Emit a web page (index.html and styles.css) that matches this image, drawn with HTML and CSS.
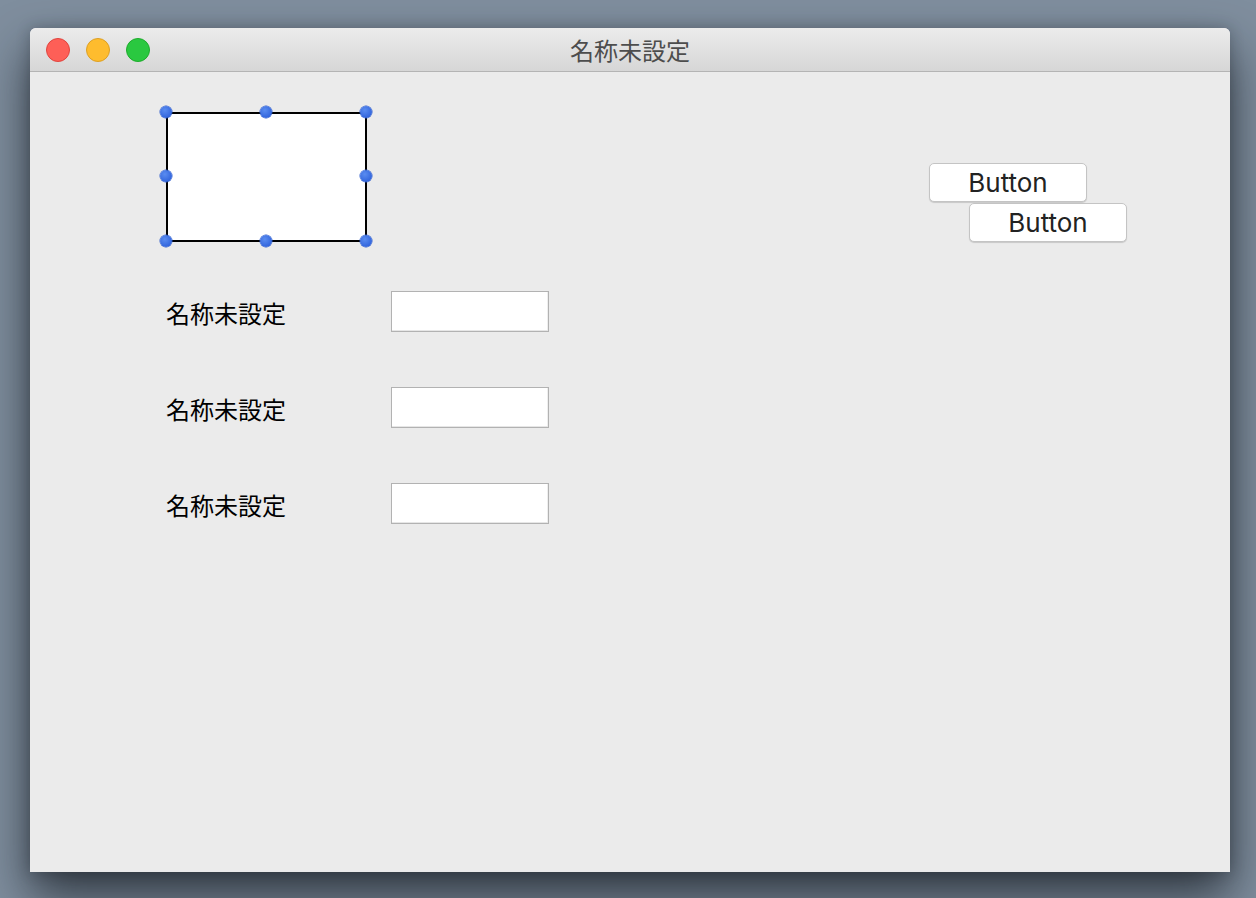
FILE: index.html
```html
<!DOCTYPE html>
<html lang="ja">
<head>
<meta charset="utf-8">
<title>名称未設定</title>
<link rel="stylesheet" href="styles.css">
</head>
<body>
<div class="window">
  <div class="titlebar">
    <div class="lights">
      <span class="light red"></span>
      <span class="light yellow"></span>
      <span class="light green"></span>
    </div>
    <div class="title">名称未設定</div>
  </div>
  <div class="content">
    <div class="top-row">
      <div class="selbox">
        <span class="h h-tl"></span><span class="h h-tm"></span><span class="h h-tr"></span>
        <span class="h h-ml"></span><span class="h h-mr"></span>
        <span class="h h-bl"></span><span class="h h-bm"></span><span class="h h-br"></span>
      </div>
      <div class="buttons">
        <button class="btn btn-a">Button</button>
        <button class="btn btn-b">Button</button>
      </div>
    </div>
    <div class="form">
      <label class="lbl">名称未設定</label><div class="field"></div>
      <label class="lbl">名称未設定</label><div class="field"></div>
      <label class="lbl">名称未設定</label><div class="field"></div>
    </div>
  </div>
</div>
</body>
</html>
```
FILE: styles.css
```css
html, body {
  margin: 0;
  padding: 0;
}
body {
  width: 1256px;
  height: 898px;
  overflow: hidden;
  background: #7f8e9e;
  font-family: "Noto Sans CJK JP", "Noto Sans", sans-serif;
  padding: 28px 0 0 30px;
  box-sizing: border-box;
}
.window {
  width: 1200px;
  height: 844px;
  border-radius: 6px 6px 0 0;
  overflow: hidden;
  box-shadow: 0 24px 48px rgba(20, 25, 32, 0.75), 0 0 14px rgba(20, 25, 32, 0.25);
  display: flex;
  flex-direction: column;
  background: #ebebeb;
}
.titlebar {
  height: 43px;
  border-bottom: 1px solid #b4b4b4;
  background: linear-gradient(#ececec, #d6d6d6);
  position: relative;
  display: flex;
  align-items: center;
  justify-content: center;
  flex: none;
}
.lights {
  position: absolute;
  left: 16px;
  top: 10px;
  display: flex;
  gap: 16px;
}
.light {
  width: 24px;
  height: 24px;
  border-radius: 50%;
  box-sizing: border-box;
}
.red { background: #fe5f57; border: 1px solid #e0443e; }
.yellow { background: #febc2e; border: 1px solid #dda024; }
.green { background: #2ac840; border: 1px solid #1dac2b; }
.title {
  font-size: 24px;
  color: #4d4d4d;
  line-height: 1;
  margin-top: 1px;
}
.content {
  flex: 1;
  padding: 40px 103px 0 136px;
  background: #ebebeb;
}
.top-row {
  display: flex;
  justify-content: space-between;
  align-items: flex-start;
}
.selbox {
  position: relative;
  width: 201px;
  height: 130px;
  box-sizing: border-box;
  border: 2px solid #000;
  background: #fff;
}
.h {
  position: absolute;
  width: 12px;
  height: 12px;
  border-radius: 50%;
  background: radial-gradient(circle at 40% 35%, #5a8cf0, #3366dd 70%);
  box-shadow: 0 0 0 0.5px #2b58c8;
}
.h-tl { left: -8px; top: -8px; }
.h-tm { left: 92px; top: -8px; }
.h-tr { left: 192px; top: -8px; }
.h-ml { left: -8px; top: 56px; }
.h-mr { left: 192px; top: 56px; }
.h-bl { left: -8px; top: 121px; }
.h-bm { left: 92px; top: 121px; }
.h-br { left: 192px; top: 121px; }
.buttons {
  display: flex;
  flex-direction: column;
  align-items: flex-end;
  margin-top: 51px;
  gap: 1px;
}
.btn {
  width: 158px;
  height: 39px;
  box-sizing: border-box;
  background: #fff;
  border: 1px solid #c4c4c4;
  border-radius: 5px;
  box-shadow: 0 1px 1px rgba(0, 0, 0, 0.15);
  font-family: Inter, "Liberation Sans", sans-serif;
  font-size: 26px;
  color: #222;
  padding: 0;
  line-height: 1;
}
.btn-a { margin-right: 40px; }
.form {
  margin-top: 49px;
  display: grid;
  grid-template-columns: 225px 158px;
  grid-auto-rows: 41px;
  row-gap: 55px;
  align-items: center;
}
.lbl {
  font-size: 24px;
  color: #000;
  line-height: 1;
  margin-top: 3px;
}
.field {
  height: 41px;
  box-sizing: border-box;
  background: #fff;
  border: 1px solid #b2b2b2;
  box-shadow: inset 0 -1px 0 #e6e6e6, inset -1px 0 0 #eeeeee;
}
```
